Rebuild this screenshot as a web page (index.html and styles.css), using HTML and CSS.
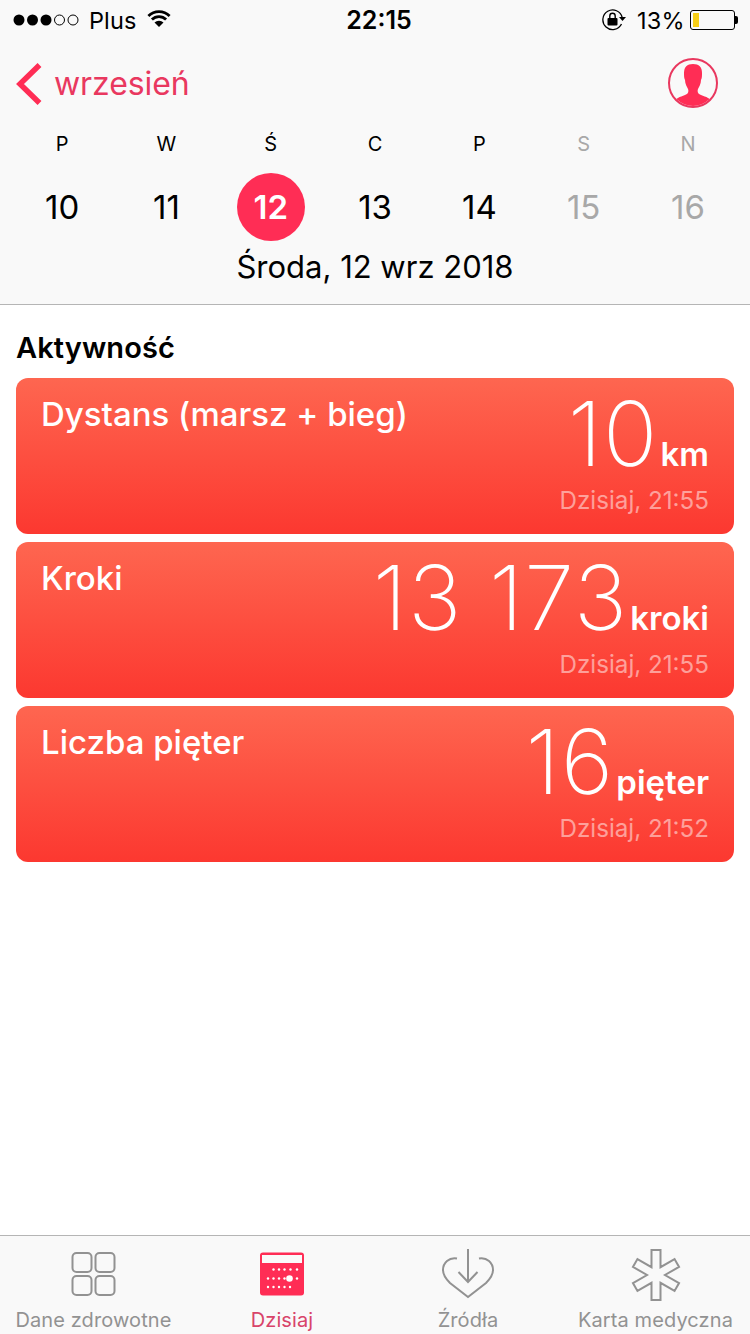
FILE: index.html
```html
<!DOCTYPE html>
<html lang="pl">
<head>
<meta charset="utf-8">
<title>Dzisiaj</title>
<link rel="stylesheet" href="styles.css">
</head>
<body>
<div class="app">
  <header class="header">
    <div class="status">
      <div class="status-left">
        <svg class="signal" width="68" height="14" viewBox="0 0 68 14"><circle cx="6" cy="7" r="5.5" fill="#000"/><circle cx="19.5" cy="7" r="5.5" fill="#000"/><circle cx="33" cy="7" r="5.5" fill="#000"/><circle cx="46.5" cy="7" r="5" fill="none" stroke="#000"/><circle cx="60" cy="7" r="5" fill="none" stroke="#000"/></svg>
        <span class="carrier">Plus</span>
        <svg class="wifi" width="24" height="18" viewBox="0 0 24 18"><path d="M1.400 6a15 15 0 0 1 21.200 0M4.900 9.500a10 10 0 0 1 14.200 0" fill="none" stroke="#000" stroke-width="2.800"/><path d="M12 17 7.500 12.500a6.400 6.400 0 0 1 9 0z" fill="#000"/></svg>
      </div>
      <div class="status-time">22:15</div>
      <div class="status-right">
        <svg class="lock" width="24" height="22" viewBox="0 0 24 22"><path d="M20.200 8.500A9.800 9.800 0 1 0 19.500 15" fill="none" stroke="#000" stroke-width="1.300"/><path d="M17 8h7l-3.500 4z" fill="#000"/><rect x="5.500" y="9" width="10" height="7.500" rx="1" fill="#000"/><path d="M7.800 9V7a2.700 2.700 0 0 1 5.400 0v2" fill="none" stroke="#000" stroke-width="1.400"/></svg>
        <span class="percent">13%</span>
        <div class="battery"><div class="battery-level"></div></div>
        <div class="battery-tip"></div>
      </div>
    </div>
    <div class="nav">
      <div class="back">
        <svg width="28" height="44" viewBox="0 0 28 44"><path d="M24.500 3 5 22l19.500 19" fill="none" stroke="#ff2d55" stroke-width="5.500"/></svg>
        <span>wrzesień</span>
      </div>
      <svg class="avatar" width="52" height="52" viewBox="0 0 52 52"><defs><clipPath id="avatar-clip"><circle cx="26" cy="26" r="23"/></clipPath></defs><circle cx="26" cy="26" r="24" fill="none" stroke="#e9385f" stroke-width="2"/><path clip-path="url(#avatar-clip)" d="M26 7c-6 0-9 3-9 9 0 3 0 5 1 7 0 4 2 7 3 9 1 3 0 5-3 6-5 2-10 3-11 8l2 8h34l2-8c-1-5-6-6-11-8-3-1-4-3-3-6 1-2 3-5 3-9 1-2 1-4 1-7 0-6-3-9-9-9z" fill="#ff2d55"/></svg>
    </div>
    <div class="week">
      <div class="day"><span class="day-letter">P</span><span class="day-num">10</span></div>
      <div class="day"><span class="day-letter">W</span><span class="day-num">11</span></div>
      <div class="day"><span class="day-letter">Ś</span><span class="day-num today">12</span></div>
      <div class="day"><span class="day-letter">C</span><span class="day-num">13</span></div>
      <div class="day"><span class="day-letter">P</span><span class="day-num">14</span></div>
      <div class="day off"><span class="day-letter">S</span><span class="day-num">15</span></div>
      <div class="day off"><span class="day-letter">N</span><span class="day-num">16</span></div>
    </div>
    <div class="full-date">Środa, 12 wrz 2018</div>
  </header>

  <main class="content">
    <h2 class="section">Aktywność</h2>
    <div class="cards">
      <article class="card">
        <h3 class="card-title">Dystans (marsz + bieg)</h3>
        <div class="card-side">
          <div class="value"><span class="num">10</span><span class="unit">km</span></div>
          <div class="when">Dzisiaj, 21:55</div>
        </div>
      </article>
      <article class="card">
        <h3 class="card-title">Kroki</h3>
        <div class="card-side">
          <div class="value"><span class="num">13 173</span><span class="unit">kroki</span></div>
          <div class="when">Dzisiaj, 21:55</div>
        </div>
      </article>
      <article class="card">
        <h3 class="card-title">Liczba pięter</h3>
        <div class="card-side">
          <div class="value"><span class="num">16</span><span class="unit">pięter</span></div>
          <div class="when">Dzisiaj, 21:52</div>
        </div>
      </article>
    </div>
  </main>

  <nav class="tabs">
    <div class="tab">
      <svg width="60" height="60" viewBox="0 0 60 60"><g fill="none" stroke="#929292" stroke-width="2"><rect x="8.500" y="9" width="19" height="19" rx="4"/><rect x="31.500" y="9" width="19" height="19" rx="4"/><rect x="8.500" y="32" width="19" height="19" rx="4"/><rect x="31.500" y="32" width="19" height="19" rx="4"/></g></svg>
      <span>Dane zdrowotne</span>
    </div>
    <div class="tab active">
      <svg width="60" height="60" viewBox="0 0 60 60"><rect x="8" y="8.500" width="44" height="43" rx="3" fill="#ff2d55"/><rect x="10" y="11" width="40" height="8" fill="#fafafa"/><g fill="#fff"><circle cx="21.500" cy="25.500" r="1.200"/><circle cx="27" cy="25.500" r="1.200"/><circle cx="32.500" cy="25.500" r="1.200"/><circle cx="38.500" cy="25.500" r="1.200"/><circle cx="45" cy="25.500" r="1.200"/><circle cx="16" cy="34.500" r="1.200"/><circle cx="21.500" cy="34.500" r="1.200"/><circle cx="27" cy="34.500" r="1.200"/><circle cx="32.500" cy="34.500" r="1.200"/><circle cx="37.500" cy="34.500" r="3.300"/><circle cx="45" cy="34.500" r="1.200"/><circle cx="16" cy="43" r="1.200"/><circle cx="21.500" cy="43" r="1.200"/><circle cx="27" cy="43" r="1.200"/><circle cx="32.500" cy="43" r="1.200"/><circle cx="38" cy="43" r="1.200"/></g></svg>
      <span>Dzisiaj</span>
    </div>
    <div class="tab">
      <svg width="60" height="60" viewBox="0 0 60 60"><g fill="none" stroke="#929292" stroke-width="2"><path d="M19 14.500C11 13 5 19 5 26c0 5 3 9 7 13l18 14 18-14c4-4 7-8 7-13 0-7-6-13-14-11.500"/><path d="M30 5v33M20.500 28l9.500 10 9.500-10"/></g></svg>
      <span>Źródła</span>
    </div>
    <div class="tab">
      <svg width="60" height="60" viewBox="0 0 60 60"><path d="M25.500 6h9v17.200l14.050-8.100 4.500 7.800L39 31l14.050 8.100-4.500 7.800-14.050-8.100V56h-9V38.800l-14.050 8.100-4.500-7.800L21 31 6.950 22.900l4.500-7.800L25.500 23.200z" fill="none" stroke="#929292" stroke-width="2"/></svg>
      <span>Karta medyczna</span>
    </div>
  </nav>
</div>
</body>
</html>
```

FILE: styles.css
```css
* { box-sizing: border-box; }
html, body { margin: 0; padding: 0; }
body {
  font-family: Inter, "Liberation Sans", sans-serif;
  background: #fff;
  color: #000;
}
.app {
  width: 750px;
  height: 1334px;
  display: flex;
  flex-direction: column;
  overflow: hidden;
}
.header {
  height: 305px;
  flex: none;
  background: #f9f9f9;
  border-bottom: 1px solid #b5b5b5;
}
.status {
  height: 40px;
  position: relative;
  display: flex;
  justify-content: space-between;
  align-items: center;
  padding: 0 12px 0 13px;
}
.status-left, .status-right { display: flex; align-items: center; }
.carrier { font-size: 23.500px; margin-left: 8px; letter-spacing: 0.1px; }
.wifi { margin-left: 11px; margin-top: -3px; }
.status-time {
  position: absolute;
  left: 8px;
  right: 0;
  text-align: center;
  font-size: 25px;
  font-weight: 600;
}
.percent { font-size: 23.500px; letter-spacing: 0.3px; margin-left: 11px; margin-right: 5px; }
.battery {
  width: 45px;
  height: 20px;
  border: 1px solid #000;
  border-radius: 3px;
  padding: 2px;
}
.battery-level { width: 6px; height: 100%; background: #f7ce15; }
.battery-tip { width: 3px; height: 8px; background: #000; border-radius: 0 2px 2px 0; }
.nav {
  height: 92px;
  display: flex;
  justify-content: space-between;
  align-items: center;
  padding: 0 31px 0 15px;
}
.back {
  display: flex;
  align-items: center;
  gap: 11px;
  margin-bottom: 5px;
  color: #e9385f;
  font-size: 32px;
  letter-spacing: -0.1px;
}
.avatar { margin-bottom: 6px; }
.week {
  display: grid;
  grid-template-columns: repeat(7, 104.300px);
  padding-left: 10px;
}
.day {
  display: flex;
  flex-direction: column;
  align-items: center;
}
.day-letter { font-size: 20px; height: 24px; line-height: 24px; }
.day-num {
  width: 68px;
  height: 68px;
  margin-top: 17px;
  border-radius: 50%;
  display: flex;
  align-items: center;
  justify-content: center;
  font-size: 33px;
  font-weight: 400;
}
.day-num.today { background: #ff2d55; color: #fff; font-weight: 600; }
.off { color: #a8a8a8; }
.full-date {
  text-align: center;
  font-size: 31px;
  line-height: 40px;
  margin-top: 6px;
}
.content { flex: 1; padding: 0 16px; }
.section {
  margin: 25px 0 12px;
  font-size: 29px;
  line-height: 36px;
  font-weight: 600;
  letter-spacing: 0.1px;
}
.cards { display: flex; flex-direction: column; gap: 8px; }
.card {
  height: 156px;
  border-radius: 12px;
  background: linear-gradient(#fe6650, #fc3830);
  color: #fff;
  display: flex;
  justify-content: space-between;
  padding: 0 25px;
}
.card-title {
  margin: 16px 0 0;
  font-size: 33px;
  line-height: 40px;
  font-weight: 500;
}
.card-side { display: flex; flex-direction: column; align-items: flex-end; }
.value {
  display: flex;
  align-items: baseline;
  gap: 2px;
  height: 100px;
}
.num {
  font-size: 90px;
  line-height: 112px;
  font-weight: 200;
  letter-spacing: 1.100px;
}
.unit { font-size: 33px; font-weight: 600; }
.when {
  font-size: 24.200px;
  line-height: 30px;
  margin-top: 8px;
  color: rgba(255, 255, 255, 0.5);
}
.tabs {
  height: 99px;
  flex: none;
  background: #f9f9f9;
  border-top: 1px solid #b5b5b5;
  display: grid;
  grid-template-columns: 187px 190px 182px 193px;
}
.tab {
  display: flex;
  flex-direction: column;
  align-items: center;
  color: #929292;
  font-size: 20px;
  letter-spacing: 0.1px;
  padding-top: 8px;
}
.tab span { margin-top: 2px; line-height: 28px; white-space: nowrap; }
.tab.active { color: #d8446a; }
```
